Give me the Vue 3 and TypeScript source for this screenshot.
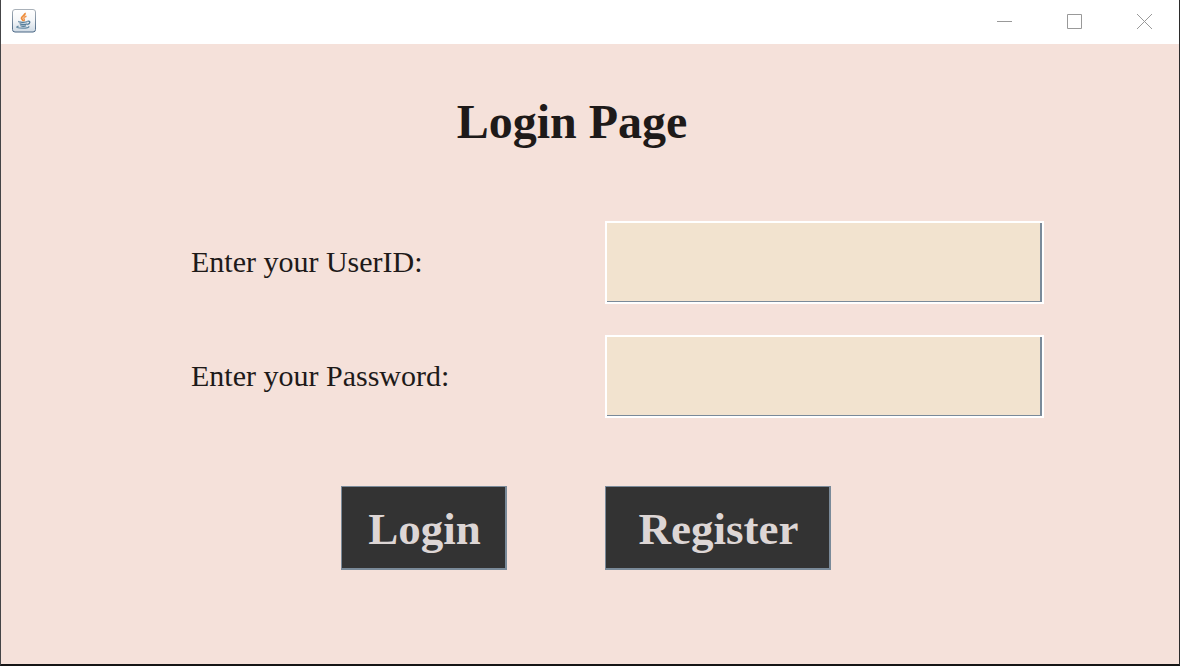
<script setup lang="ts">
import { ref } from 'vue'

const userId = ref('')
const password = ref('')

function submit(): void {
  password.value = ''
}
</script>

<template>
  <div class="window">
    <header class="titlebar">
      <svg class="app-icon" viewBox="0 0 24 24" width="24" height="24" aria-hidden="true">
        <defs>
          <linearGradient id="tile" x1="0" y1="0" x2="0" y2="1">
            <stop offset="0" stop-color="#ffffff" />
            <stop offset="0.5" stop-color="#f4f6f8" />
            <stop offset="1" stop-color="#cfdae4" />
          </linearGradient>
          <linearGradient id="rim" x1="0" y1="0" x2="0" y2="1">
            <stop offset="0" stop-color="#a9b1b9" />
            <stop offset="1" stop-color="#486583" />
          </linearGradient>
        </defs>
        <rect x="0.5" y="0.5" width="23" height="22.5" rx="2.5" fill="url(#tile)" stroke="url(#rim)" />
        <path d="M12.8 4C14 6 9.2 7.3 9.5 9.2C9.7 10.4 11.2 11 11.6 12.2" fill="none" stroke="#ee8a35" stroke-width="1.8" />
        <path d="M14.5 7.2C12.2 7.8 11.2 8.9 12.1 9.9C12.7 10.6 12.5 11.3 11.9 12" fill="none" stroke="#f0944a" stroke-width="1.4" />
        <path d="M7 12.3C5.7 13.5 14.3 13.6 15.6 12.6M7.7 14.6C8.2 15.8 13.5 15.7 14.9 14.9M8.4 16.5C9 17.6 13 17.4 14.1 16.8" fill="none" stroke="#557d99" stroke-width="1.3" />
        <path d="M15.6 12.2C18.8 11.5 18.4 14.8 15.2 15.5" fill="none" stroke="#557d99" stroke-width="1.3" />
        <path d="M6.6 17.2C2.8 18 5.5 19.2 10.5 19.2C15 19.2 18.1 18.3 16.4 17.3" fill="none" stroke="#6489a3" stroke-width="1.3" />
      </svg>
      <div class="controls">
        <button type="button" aria-label="Minimize">
          <svg viewBox="0 0 15 15" width="15" height="15"><path d="M0 7.5H15" /></svg>
        </button>
        <button type="button" aria-label="Maximize">
          <svg viewBox="0 0 15 15" width="15" height="15"><path d="M.5 .5H14.5V14.5H.5Z" /></svg>
        </button>
        <button type="button" aria-label="Close">
          <svg viewBox="0 0 15 15" width="15" height="15"><path d="M0 0L15 15M15 0L0 15" /></svg>
        </button>
      </div>
    </header>

    <main class="page">
      <h1>Login Page</h1>
      <form class="form" @submit.prevent="submit">
        <div class="fields">
          <label for="user-id">Enter your UserID:</label>
          <div class="field"><input id="user-id" v-model="userId" type="text" autocomplete="off" /></div>
          <label for="password">Enter your Password:</label>
          <div class="field"><input id="password" v-model="password" type="password" autocomplete="off" /></div>
        </div>
        <div class="actions">
          <button class="action login" type="submit">Login</button>
          <button class="action register" type="button">Register</button>
        </div>
      </form>
    </main>
  </div>
</template>

<style>
body {
  margin: 0;
  background: #f5e1da;
}
</style>

<style scoped>
.window {
  box-sizing: border-box;
  min-height: 100vh;
  display: flex;
  flex-direction: column;
  border: solid #2b2b2b;
  border-width: 0 1px 2px;
  border-left-color: #444446;
  border-bottom-color: #151515;
  background: #f5e1da;
  color: #1e1a19;
  font-family: "Liberation Serif", "Times New Roman", serif;
}

.titlebar {
  display: flex;
  align-items: center;
  justify-content: space-between;
  height: 44px;
  padding-left: 11px;
  background: #ffffff;
}

.app-icon {
  display: block;
  margin-bottom: 2px;
}

.controls {
  display: flex;
  align-self: stretch;
}

.controls button {
  display: flex;
  align-items: center;
  justify-content: center;
  width: 70px;
  padding: 0 0 1px;
  border: 0;
  background: transparent;
}

.controls svg {
  display: block;
  fill: none;
  stroke: #999999;
  stroke-width: 1;
}

h1 {
  margin: 0;
  padding: 50px 36px 0 0;
  text-align: center;
  font-size: 48px;
  line-height: 56px;
  font-weight: 700;
}

.form {
  padding: 71px 135px 40px 190px;
}

.fields,
.actions {
  display: grid;
  grid-template-columns: 414fr 439fr;
}

.fields {
  row-gap: 31px;
  align-items: center;
}

label {
  padding-bottom: 2px;
  font-size: 30px;
  line-height: 36px;
}

.field {
  box-sizing: border-box;
  height: 83px;
  border: 2px solid #ffffff;
}

input {
  display: block;
  box-sizing: border-box;
  width: 100%;
  height: 100%;
  padding: 0 8px;
  border: solid #7a8a99;
  border-width: 0 2px 1px 0;
  border-radius: 0;
  outline: 0;
  background: #f2e3cf;
  color: inherit;
  font: 30px "Liberation Serif", "Times New Roman", serif;
}

.actions {
  margin-top: 68px;
}

.action {
  box-sizing: border-box;
  height: 84px;
  padding: 2px 0 0 2px;
  border: solid #7a8a99;
  border-width: 1px 2px 2px 1px;
  border-radius: 0;
  background: #333333;
  color: #ddd6d5;
  font: 700 45px "Liberation Serif", "Times New Roman", serif;
}

.login {
  justify-self: end;
  width: 166px;
  margin-right: 98px;
}

.register {
  width: 226px;
}
</style>
